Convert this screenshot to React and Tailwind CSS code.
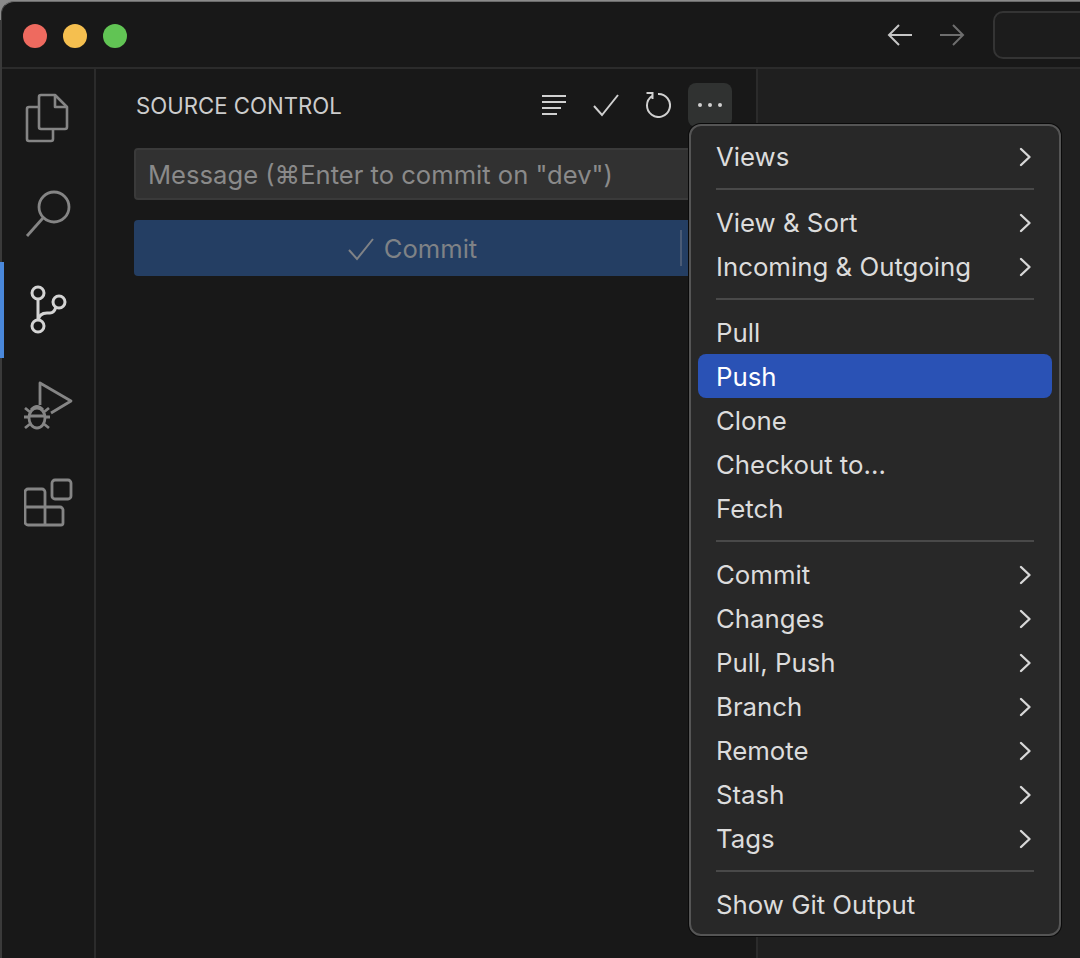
const font = { fontFamily: '"Inter", "Noto Sans", sans-serif' };

function Chevron() {
  return (
    <svg className="mt-[-2px] mr-[1px]" width="14" height="20" viewBox="0 0 14 20" fill="none" stroke="#d8d8d8" strokeWidth="2.4" strokeLinecap="round" strokeLinejoin="round">
      <path d="M3 2 L11.5 10 L3 18" />
    </svg>
  );
}

function Item({ label, sub, active }) {
  return (
    <div className={`h-[44px] pl-[18px] pr-[19px] pt-[3px] flex items-center justify-between rounded-[8px] text-[25.8px] ${active ? 'bg-[#2a52b5] text-[#ffffff]' : 'text-[#dcdcdc]'}`}>
      <span>{label}</span>
      {sub && <Chevron />}
    </div>
  );
}

function Sep() {
  return (
    <div className="h-[22px] pt-[10px] px-[18px]">
      <div className="h-[2px] w-full bg-[#494949]" />
    </div>
  );
}

function FilesIcon() {
  return (
    <svg className="mr-[2px]" width="46" height="50" viewBox="0 0 46 50" fill="none" stroke="#858585" strokeWidth="2.6" strokeLinejoin="round">
      <path d="M14 4 a2 2 0 0 1 2-2 h14 l12 12 v20 a2 2 0 0 1-2 2 H16 a2 2 0 0 1-2-2 Z" />
      <path d="M30 2 v12 h12" />
      <path d="M14 14 H4 a2 2 0 0 0-2 2 v30 a2 2 0 0 0 2 2 h22 a2 2 0 0 0 2-2 V36" />
    </svg>
  );
}

function SearchIcon() {
  return (
    <svg width="48" height="50" viewBox="0 0 48 50" fill="none" stroke="#858585" strokeWidth="2.8">
      <circle cx="29" cy="18" r="15" />
      <path d="M18 29 L2 47" />
    </svg>
  );
}

function GitIcon() {
  return (
    <svg width="40" height="50" viewBox="0 0 40 50" fill="none" stroke="#d4d4d4" strokeWidth="3">
      <circle cx="9" cy="8" r="6" />
      <circle cx="9" cy="41" r="6" />
      <circle cx="30" cy="17" r="6" />
      <path d="M9 14 V35" />
      <path d="M9 36 Q10 28 18 28 H21 Q25 28 27 22" />
    </svg>
  );
}

function DebugIcon() {
  return (
    <svg width="50" height="50" viewBox="0 0 50 50" fill="none" stroke="#858585" strokeWidth="2.8">
      <path d="M16 24 V2 L47 20 L27 32" strokeLinejoin="round" />
      <ellipse cx="13" cy="37" rx="8" ry="10" />
      <path d="M6 35 H20 M7 29 Q13 22 19 29" />
      <path d="M0 36 H5 M21 36 H26 M1 27 L6 31 M25 27 L20 31 M1 47 L6 43 M25 47 L20 43" />
    </svg>
  );
}

function ExtIcon() {
  return (
    <svg className="mt-[1px]" width="50" height="50" viewBox="0 0 50 50" fill="none" stroke="#858585" strokeWidth="2.8" strokeLinejoin="round">
      <rect x="28" y="2" width="19" height="19" rx="3" />
      <path d="M4 11 H18 a3 3 0 0 1 3 3 V29 H36 a3 3 0 0 1 3 3 V45 a2 2 0 0 1-2 2 H4 a3 3 0 0 1-3-3 V14 a3 3 0 0 1 3-3 Z" />
      <path d="M1 29 H21 V47" />
    </svg>
  );
}

export default function App() {
  const rail = 'flex justify-center items-center pl-[2px]';
  return (
    <div style={font} className="relative w-[1080px] h-[958px] overflow-hidden bg-[linear-gradient(#8a8a8a_0px,#8a8a8a_20px,#3a3a3a_20px)]">
      <div className="w-[1082px] h-[958px] ml-[1px] mt-[1px] rounded-tl-[13px] bg-[#181818] border-t border-l border-t-[#6a6a6a] border-l-[#3a3a3a] flex flex-col">
        <div className="h-[67px] shrink-0 border-b-2 border-[#2b2b2b] flex items-center pl-[21px] relative">
          <div className="flex gap-[16px] mt-[3px]">
            <span className="w-[24px] h-[24px] rounded-full bg-[#ee6a5f]" />
            <span className="w-[24px] h-[24px] rounded-full bg-[#f5bf4f]" />
            <span className="w-[24px] h-[24px] rounded-full bg-[#61c454]" />
          </div>
          <div className="ml-auto flex items-center gap-[26px]">
            <svg width="26" height="24" viewBox="0 0 26 24" fill="none" stroke="#c6c6c6" strokeWidth="2">
              <path d="M25 12 H2 M12 2 L2 12 L12 22" />
            </svg>
            <svg width="26" height="24" viewBox="0 0 26 24" fill="none" stroke="#6e6e6e" strokeWidth="2">
              <path d="M1 12 H24 M14 2 L24 12 L14 22" />
            </svg>
            <div className="w-[94px] h-[48px] ml-[2px] mr-[-4px] rounded-l-[10px] border-2 border-[#343434] bg-[#1c1c1c]" />
          </div>
        </div>
        <div className="flex flex-1 min-h-0">
          <div className="w-[94px] shrink-0 border-r-2 border-[#2b2b2b] relative flex flex-col pt-[24px] gap-[46px]">
            <div className={rail}><FilesIcon /></div>
            <div className={rail}><SearchIcon /></div>
            <div className={rail}><GitIcon /></div>
            <div className={rail}><DebugIcon /></div>
            <div className={rail}><ExtIcon /></div>
            <div className="absolute left-[-2px] top-[193px] w-[4px] h-[96px] bg-[#4a88db]" />
          </div>
          <div className="w-[662px] shrink-0 border-r-2 border-[#2b2b2b] pl-[38px] pt-[14px]">
            <div className="h-[44px] flex items-center">
              <span className="text-[22.2px] text-[#cccccc] w-[405px] ml-[2px] pt-[2px]">SOURCE CONTROL</span>
              <div className="flex items-center">
                <svg width="26" height="22" viewBox="0 0 26 22" fill="none" stroke="#d0d0d0" strokeWidth="2">
                  <path d="M1 2 H25 M1 8 H25 M1 14 H20 M1 20 H16" />
                </svg>
                <svg className="ml-[25px]" width="28" height="24" viewBox="0 0 28 24" fill="none" stroke="#d0d0d0" strokeWidth="2">
                  <path d="M2 13 L10 22 L26 2" />
                </svg>
                <svg className="ml-[25px]" width="26" height="26" viewBox="0 0 26 26" fill="none" stroke="#d0d0d0" strokeWidth="2">
                  <path d="M7 4 A11.5 11.5 0 1 0 13 2 M1.5 1 H7.5 V7" />
                </svg>
                <div className="ml-[17px] w-[44px] h-[44px] rounded-[8px] bg-[#303231] flex items-center justify-center gap-[6px]">
                  <span className="w-[4px] h-[4px] rounded-full bg-[#d0d0d0]" />
                  <span className="w-[4px] h-[4px] rounded-full bg-[#d0d0d0]" />
                  <span className="w-[4px] h-[4px] rounded-full bg-[#d0d0d0]" />
                </div>
              </div>
            </div>
            <div className="mt-[21px] w-[600px] h-[52px] rounded-[4px] bg-[#313131] border-2 border-[#3a3a3a] flex items-center pl-[12px] pt-[2px] text-[25.6px] text-[#8a8a8a]">
              Message (⌘Enter to commit on "dev")
            </div>
            <div className="mt-[20px] w-[600px] h-[56px] rounded-[4px] bg-[#243e63] flex items-center relative text-[25.6px] text-[#7f8286]">
              <div className="w-[546px] pl-[10px] pt-[2px] flex items-center justify-center gap-[9px] h-full">
                <svg width="28" height="24" viewBox="0 0 28 24" fill="none" stroke="#7f8286" strokeWidth="2">
                  <path d="M2 13 L10 22 L26 2" />
                </svg>
                <span>Commit</span>
              </div>
              <div className="w-[2px] h-[36px] bg-[#4a5b76]" />
            </div>
          </div>
          <div className="flex-1 bg-[#1f1f1f]" />
        </div>
      </div>
      <div className="absolute left-[689px] top-[124px] w-[372px] h-[812px] rounded-[12px] border-2 border-[#555555] bg-[#282828] px-[7px] pt-[8px] shadow-[0_0_0_1px_#0a0a0a]">
        <Item label="Views" sub />
        <Sep />
        <Item label="View & Sort" sub />
        <Item label="Incoming & Outgoing" sub />
        <Sep />
        <Item label="Pull" />
        <Item label="Push" active />
        <Item label="Clone" />
        <Item label="Checkout to..." />
        <Item label="Fetch" />
        <Sep />
        <Item label="Commit" sub />
        <Item label="Changes" sub />
        <Item label="Pull, Push" sub />
        <Item label="Branch" sub />
        <Item label="Remote" sub />
        <Item label="Stash" sub />
        <Item label="Tags" sub />
        <Sep />
        <Item label="Show Git Output" />
      </div>
    </div>
  );
}
